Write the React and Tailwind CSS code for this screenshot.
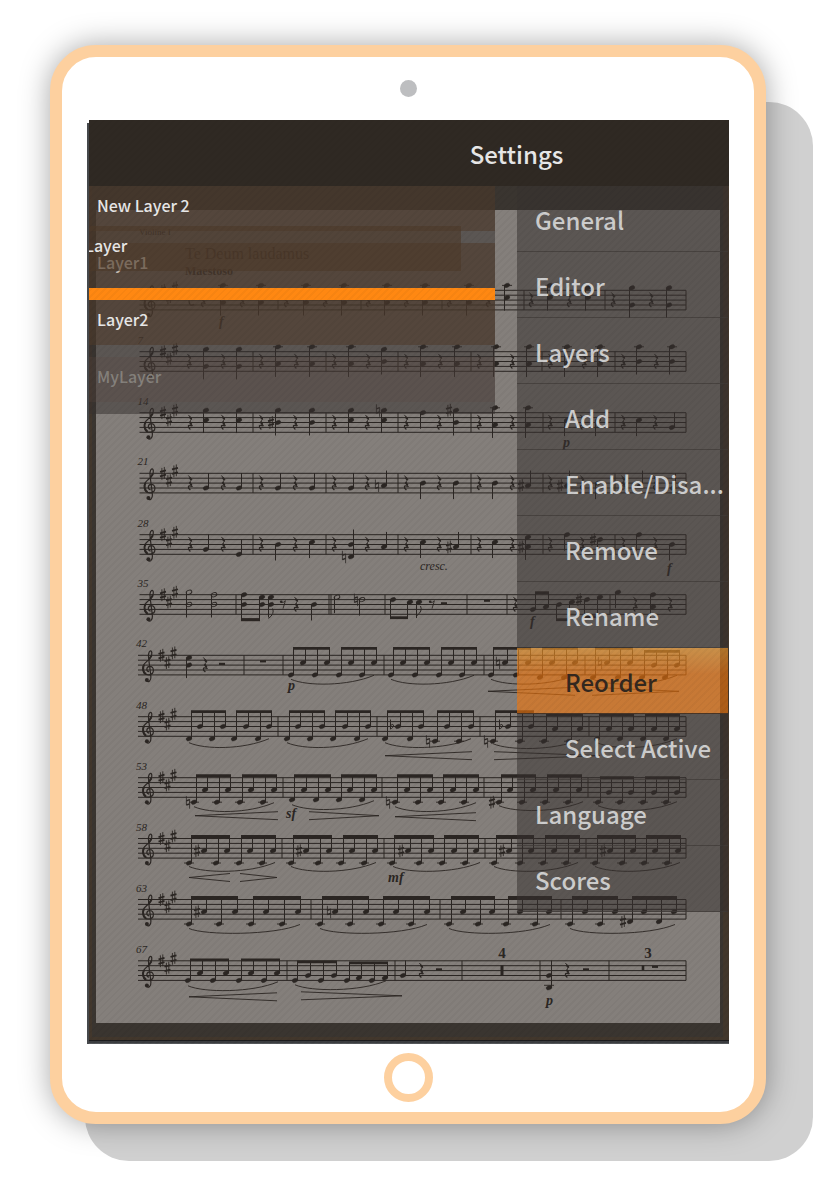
import React from "react";
import clsx from "clsx";

const INK = "#2b2623";
const STEP = 2.45;

const layers = [
  { name: "New Layer 2", tone: "active" },
  { name: "Layer1", tone: "target" },
  { name: "Layer2", tone: "active", dropBefore: true },
  { name: "MyLayer", tone: "dragged" },
];

const menuItems = [
  { label: "General" },
  { label: "Editor" },
  { label: "Layers" },
  { label: "Add", sub: true },
  { label: "Enable/Disa...", sub: true },
  { label: "Remove", sub: true },
  { label: "Rename", sub: true },
  { label: "Reorder", sub: true, selected: true },
  { label: "Select Active", sub: true },
  { label: "Language" },
  { label: "Scores" },
];

// Tokens: r quarter rest, q eighth rest, h half rest, w whole rest, | bar line,
// s sharp, n natural, b flat, u/d note with stem up/down, H half note,
// F flagged note. Steps count half spaces down from the top line.
// beams: [y above the staff, x positions, steps]
const staves = [
  {
    y: 290.3,
    notes:
      "r203 d223:-2,5 r242 d261:-2,5 |278 r286 d306:-2,5 r325 d344:-2,5 |361 r368 d387:-2,5 r406 d425:-2,5 |442 r449 d469:-2,5 r488 d507:-2,3 |524 r531 d550:-2,3 r569 d588:-1,3 |605 r613 d632:-1,6 r651 d669:-1,6",
    time: true,
    marks: [["f", 219, 36]],
  },
  {
    y: 351.7,
    num: "7",
    notes:
      "r189 d206:-1,6 r223 d239:-1,6 |253 r261 d278:-2,5 r296 d312:-2,5 |326 r334 d351:-2,5 r368 d384:-1,4 |398 r406 d423:-2,5 r440 d457:-2,5 |471 r479 d496:-2,5 r512 d529:-2,5 |542 r550 d567:-2,5 r584 d600:-2,5 |615 r623 d639:-2,4 r656 d672:-2,4",
  },
  {
    y: 412.7,
    num: "14",
    notes:
      "r190 d206:-1,3 r223 d239:-1,3 |253 r261 s271:4 d278:-1,4 r295 d312:-1,4 |326 r334 d351:-1,3 r367 n378:-1 d384:-1,3 |398 r406 d423:0 r439 s449:-1 d456:-1,4 |471 r479 d495:-2,5 r512 d528:-2,5 |543 r550 d567:3 r582 d598:3 |615 r623 d639:3 r655 u672:6",
    marks: [["p", 563, 34]],
  },
  {
    y: 473.3,
    num: "21",
    notes:
      "r190 u206:6 r223 u239:6 |253 r261 u278:6 r295 u312:6 |326 r334 u351:6 r367 n377:5 u384:5 |398 r406 d423:4 r439 d456:4 |471 r479 d495:4 r512 s521:5 u528:5 |543 r550 s560:5 u567:5 r582 d598:4 |615 r623 u640:5 r655 u673:6",
  },
  {
    y: 534.7,
    num: "28",
    notes:
      "r190 u206:6 r223 u239:8 |253 r261 d278:4 r295 d312:3 |326 r334 n344:9 u351:4,9 r367 u384:5 |398 r406 d423:3 r439 s449:5 u456:5 |471 r479 d495:3 r512 s521:5 d528:1,5 |543 r550 d567:0 r582 s593:2 d600:2 |615 r623 d639:0 r655 d672:4",
    marks: [["cresc.", 420, 35, true], ["f", 667, 38]],
  },
  {
    y: 594.7,
    num: "35",
    notes:
      "H189:-1,4 H214:0,4 |236 F271:1,4 q283 r296 d314:4 |329 |331 H337:1 n356:2 H362:2 |385 F419:3 q432 h444 |467 w487 |507 r515 s579:2 |610 d618:-1 r635 d653:0,5 r670",
    beams: [
      [25, [244, 262], [0, 1]],
      [25, [244, 262], [4, 4]],
      [23, [393, 410], [2, 3]],
      [-2, [533, 546], [6, 5]],
      [25, [559, 572], [4, 3]],
      [22, [587, 600], [2, 1]],
    ],
    marks: [["f", 530, 31]],
  },
  {
    y: 655.3,
    num: "42",
    notes: "d189:1,4 r205 h222 |244 w263 |283 |384 |484 n498:3 |585 n600:3",
    beams: [
      [-7, [291, 303, 315, 327], [8, 3, 8, 3]],
      [-7, [339, 351, 362, 374], [8, 3, 8, 3]],
      [-7, [391, 403, 415, 427], [8, 3, 8, 3]],
      [-7, [439, 451, 462, 474], [8, 3, 8, 3]],
      [-7, [491, 505, 516, 528], [8, 3, 8, 3]],
      [-7, [540, 552, 564, 575], [9, 3, 9, 3]],
      [-7, [593, 607, 618, 630], [9, 3, 9, 3]],
      [-4, [642, 654, 665, 677], [9, 4, 9, 4]],
    ],
    slurs: [[291, 374, 24], [391, 474, 24], [491, 575, 24], [593, 677, 24]],
    pins: [[488, 575, 36], [679, 592, 36]],
    marks: [["p", 288, 35]],
  },
  {
    y: 716.7,
    num: "48",
    notes: "|278 |377 b392:4 n428:10 |480 n486:10 b501:4 |589",
    beams: [
      [-5, [189, 200, 212, 223], [9, 4, 9, 4]],
      [-5, [234, 246, 258, 269], [9, 4, 9, 4]],
      [-5, [287, 298, 310, 322], [9, 4, 9, 4]],
      [-5, [333, 345, 357, 368], [9, 4, 9, 4]],
      [-5, [385, 398, 410, 421], [9, 4, 9, 4]],
      [-5, [435, 447, 459, 471], [10, 4, 10, 4]],
      [-5, [493, 508, 520, 531], [10, 4, 10, 4]],
      [-2, [544, 555, 569, 580], [10, 5, 10, 5]],
      [-2, [597, 609, 620, 631], [9, 5, 9, 5]],
      [-2, [643, 654, 666, 677], [9, 5, 9, 5]],
    ],
    slurs: [[189, 269, 26], [287, 368, 26], [385, 471, 26], [493, 580, 27], [597, 677, 26]],
    pins: [[385, 472, 39], [600, 494, 39]],
  },
  {
    y: 777.7,
    num: "53",
    notes: "n188:10 |283 |382 n388:10 |484 s492:10 |588",
    beams: [
      [-2, [194, 205, 217, 228], [10, 5, 10, 5]],
      [-2, [240, 251, 263, 274], [10, 5, 10, 5]],
      [-2, [292, 304, 316, 328], [9, 5, 9, 5]],
      [-2, [339, 350, 362, 374], [9, 5, 9, 5]],
      [-2, [395, 407, 418, 430], [10, 5, 10, 5]],
      [-2, [441, 453, 464, 476], [10, 5, 10, 5]],
      [-2, [499, 510, 522, 533], [10, 5, 10, 5]],
      [-2, [545, 556, 568, 579], [10, 5, 10, 5]],
      [0, [598, 609, 620, 631], [10, 6, 10, 6]],
      [0, [643, 654, 666, 677], [10, 6, 10, 6]],
    ],
    slurs: [[194, 274, 29], [292, 374, 27], [395, 476, 29], [499, 583, 28], [598, 677, 28]],
    pins: [[195, 278, 38], [379, 309, 38], [395, 476, 39]],
    marks: [["sf", 286, 40]],
  },
  {
    y: 838.5,
    num: "58",
    notes: "s197:5 |282 s299:5 |384 s401:5 |485 s502:5 |586 s603:5",
    beams: [
      [-2, [189, 204, 216, 227], [10, 5, 10, 5]],
      [-2, [239, 250, 262, 273], [10, 5, 10, 5]],
      [-2, [291, 306, 318, 329], [10, 5, 10, 5]],
      [-2, [341, 352, 364, 375], [10, 5, 10, 5]],
      [-2, [392, 408, 419, 431], [10, 5, 10, 5]],
      [-2, [442, 454, 465, 476], [10, 5, 10, 5]],
      [-2, [494, 509, 520, 531], [10, 5, 10, 5]],
      [-2, [543, 554, 566, 577], [10, 5, 10, 5]],
      [-2, [595, 610, 622, 633], [10, 5, 10, 5]],
      [-2, [644, 655, 667, 678], [10, 5, 10, 5]],
    ],
    slurs: [[189, 275, 28], [291, 376, 28], [393, 480, 28], [494, 578, 28], [595, 680, 28]],
    pins: [[189, 230, 39], [277, 240, 39]],
    marks: [["mf", 388, 43]],
  },
  {
    y: 899.5,
    num: "63",
    notes: "s197:5 |311 n329:5 |440 |561 s623:9",
    beams: [
      [-2, [189, 204, 219, 235], [10, 5, 10, 5]],
      [-2, [251, 266, 282, 298], [10, 5, 10, 5]],
      [-2, [320, 335, 350, 366], [10, 5, 10, 5]],
      [-2, [381, 396, 411, 427], [10, 5, 10, 5]],
      [-2, [449, 463, 478, 492], [10, 5, 10, 5]],
      [-2, [506, 520, 535, 549], [10, 5, 10, 5]],
      [-2, [570, 585, 600, 615], [10, 5, 10, 5]],
      [-2, [630, 644, 659, 674], [9, 5, 9, 5]],
    ],
    slurs: [[189, 300, 29], [320, 427, 29], [449, 550, 29], [570, 675, 29]],
  },
  {
    y: 960.8,
    num: "67",
    notes: "|287 |395 u403:6 r421 h439 |462 |540 u549:6,11 r567 h586 |609 w655",
    beams: [
      [-1, [188, 200, 213, 226], [8, 5, 8, 5]],
      [-1, [239, 251, 264, 277], [8, 5, 8, 5]],
      [1, [295, 308, 321, 334], [8, 6, 8, 6]],
      [2, [347, 359, 372, 385], [8, 7, 8, 7]],
    ],
    slurs: [[188, 278, 25], [295, 386, 24]],
    pins: [[189, 277, 36], [402, 301, 35]],
    marks: [["p", 546, 44]],
    multi: true,
  },
];

const Head = ({ x, y, hollow }) => (
  <ellipse
    cx={x}
    cy={y}
    rx="2.9"
    ry="2"
    transform={`rotate(-22 ${x} ${y})`}
    fill={hollow ? "none" : INK}
    stroke={INK}
    strokeWidth={hollow ? 0.9 : 0.4}
  />
);

const Ledgers = ({ x, y, step }) => {
  const steps = [];
  for (let s = -2; s >= step; s -= 2) steps.push(s);
  for (let s = 10; s <= step; s += 2) steps.push(s);
  return steps.map((s) => (
    <path key={s} d={`M${x - 5} ${y + s * STEP}h10`} strokeWidth="0.9" />
  ));
};

const Accidental = ({ kind, x, y }) => {
  if (kind === "s") {
    return (
      <g transform={`translate(${x} ${y})`}>
        <path d="M-1.1 -5.4V6.4M1.3 -6.4V5.4" strokeWidth="0.9" />
        <path d="M-3 -1.4L3 -3M-3 3L3 1.4" strokeWidth="1.8" />
      </g>
    );
  }
  if (kind === "n") {
    return (
      <g transform={`translate(${x} ${y})`}>
        <path d="M-1.6 -6V3M1.6 -3V6.5" strokeWidth="0.8" />
        <path d="M-1.6 -1.4L1.6 -2.6M-1.6 2.8L1.6 1.6" strokeWidth="1.4" />
      </g>
    );
  }
  return (
    <path
      transform={`translate(${x} ${y})`}
      d="M-1.5 -7V2.6C0 2 2 0 1.6 -1.4C1 -2.6 -1 -1.8 -1.5 -0.6"
      strokeWidth="1"
    />
  );
};

const Symbol = ({ token, top }) => {
  const kind = token[0];
  const [pos, list] = token.slice(1).split(":");
  const x = Number(pos);
  const steps = list ? list.split(",").map(Number) : [];
  const ys = steps.map((s) => top + s * STEP);

  if (kind === "|") return <path d={`M${x} ${top}v19.6`} strokeWidth="1" />;
  if (kind === "r") {
    return (
      <g transform={`translate(${x} ${top + 9.8})`}>
        <path d="M-1.6 -7.6L1.8 -3.4C-0.6 -1.2 -0.6 0 2.4 3.4" strokeWidth="1" />
        <path d="M-0.4 -5.6L1.4 -3.2M-0.5 -0.9L1.6 2.2" strokeWidth="1.9" />
        <path d="M2.4 3.4C-2.6 1.6 -2.6 4.2 0.4 7" strokeWidth="1.3" />
      </g>
    );
  }
  if (kind === "q") {
    return (
      <g transform={`translate(${x} ${top + 9})`}>
        <circle cx="-1.8" cy="-2" r="1.3" fill={INK} stroke="none" />
        <path d="M-2 -1.4Q0.5 -0.6 2.4 -3L0 5" strokeWidth="0.9" />
      </g>
    );
  }
  if (kind === "h") return <path d={`M${x - 3} ${top + 8.6}h6`} strokeWidth="2.2" />;
  if (kind === "w") return <path d={`M${x - 3} ${top + 6}h6`} strokeWidth="2.2" />;
  if ("snb".includes(kind)) return <Accidental kind={kind} x={x} y={ys[0]} />;

  const high = Math.min(...ys);
  const low = Math.max(...ys);
  const up = kind === "u";
  return (
    <g>
      {ys.map((y, i) => (
        <React.Fragment key={i}>
          <Head x={x} y={y} hollow={kind === "H"} />
          <Ledgers x={x} y={top} step={steps[i]} />
        </React.Fragment>
      ))}
      {up ? (
        <path d={`M${x + 2.5} ${low}V${high - 15}`} />
      ) : (
        <path d={`M${x - 2.5} ${high}V${low + (ys.length > 1 ? 13 : 16)}`} />
      )}
      {kind === "F" && (
        <path d={`M${x - 2.5} ${low + 14}Q${x + 4} ${low + 9} ${x + 1.5} ${low + 4}`} />
      )}
    </g>
  );
};

const Beam = ({ top, data: [offset, xs, steps] }) => {
  const y = top + offset;
  const side = offset > 10 ? -2.5 : 2.5;
  return (
    <g>
      {xs.map((x, i) => (
        <g key={x}>
          <Head x={x} y={top + steps[i] * STEP} />
          <Ledgers x={x} y={top} step={steps[i]} />
          <path d={`M${x + side} ${top + steps[i] * STEP}V${y}`} />
        </g>
      ))}
      <path d={`M${xs[0] + side - 0.5} ${y}H${xs[xs.length - 1] + side + 0.5}`} strokeWidth="2.8" />
    </g>
  );
};

const Staff = ({ staff, index }) => {
  const { y, num, notes, beams = [], slurs = [], pins = [], marks = [] } = staff;
  const left = index > 5 ? 138 : 139.5;
  return (
    <g fill="none" stroke={INK} strokeWidth="1">
      {[0, 1, 2, 3, 4].map((i) => (
        <path key={i} d={`M${left} ${y + i * 4.9}H686`} strokeWidth="1" />
      ))}
      <path d={`M686 ${y}v19.6`} />
      <g transform={`translate(${left + 10.5} ${y})`}>
        <path
          d="M0.6 16.4C-2.6 15.8 -2.4 11.4 1 11C6 10.6 6.6 19 0.4 19.5C-6.8 19.8 -7.4 11 -2.4 6.8C1.6 3.4 3.8 0.4 3.3 -2.8C2.6 -5.8 0.6 -4.4 0 -1C-0.4 2 1.8 14 2.4 21.6C2.6 25.6 0 27 -1.6 26"
          strokeWidth="1.2"
        />
        <path d="M-4.4 9.4C-6.4 12.6 -5.4 17 -2.4 18.8M0.2 4.4L3 0.4" strokeWidth="1.9" />
        <circle cx="-1.6" cy="24.6" r="2" fill={INK} stroke="none" />
      </g>
      <Accidental kind="s" x={left + 23.5} y={y} />
      <Accidental kind="s" x={left + 29.5} y={y + 3 * STEP} />
      <Accidental kind="s" x={left + 35.5} y={y - STEP} />
      {staff.time && <path d={`M194 ${y + 6}q-5 -3 -5 4t5 4`} strokeWidth="1.4" />}
      {notes.split(" ").map((token) => (
        <Symbol key={token} token={token} top={y} />
      ))}
      {beams.map((beam, i) => (
        <Beam key={i} top={y} data={beam} />
      ))}
      {slurs.map(([a, b, dy]) => (
        <path
          key={a}
          d={`M${a} ${y + dy}C${a + 16} ${y + dy + 7} ${b - 26} ${y + dy + 7} ${b} ${y + dy - 4}`}
          strokeWidth="0.9"
        />
      ))}
      {pins.map(([a, b, dy]) => (
        <path key={a} d={`M${b} ${y + dy - 4}L${a} ${y + dy}L${b} ${y + dy + 4}`} strokeWidth="0.9" />
      ))}
      {staff.multi && (
        <>
          <path d={`M502 ${y + 4.5}v10`} strokeWidth="3" />
          <path d={`M643 ${y + 4.5}v5`} strokeWidth="2.6" />
        </>
      )}
      <g fill={INK} stroke="none" className="[font-family:'Liberation_Serif',serif]">
        {num && (
          <text x={left - 2} y={y - 8} fontSize="11" fontStyle="italic">
            {num}
          </text>
        )}
        {marks.map(([label, x, dy, plain]) => (
          <text
            key={label}
            x={x}
            y={y + dy}
            fontSize={plain ? 12 : 14}
            fontStyle="italic"
            fontWeight={plain ? 400 : 700}
          >
            {label}
          </text>
        ))}
        {staff.multi && (
          <g fontSize="15" fontWeight="700" textAnchor="middle">
            <text x="502" y={y - 3}>4</text>
            <text x="648" y={y - 3}>3</text>
          </g>
        )}
      </g>
    </g>
  );
};

const SheetMusic = () => (
  <svg viewBox="96 210 624 813" className="block w-full bg-[#847f7b]" role="img" aria-label="Score">
    <g fill={INK} className="[font-family:'Liberation_Serif',serif]">
      <text x="139" y="235" fontSize="9">Violine I</text>
      <text x="185" y="259" fontSize="16">Te Deum laudamus</text>
      <text x="185" y="275" fontSize="12" fontWeight="700">Maestoso</text>
    </g>
    {staves.map((staff, i) => (
      <Staff key={i} staff={staff} index={i} />
    ))}
  </svg>
);

const LayerList = () => (
  <ul className="relative flex-1 overflow-hidden self-start bg-[#363230]/53 pb-3 text-base font-medium">
    {layers.map(({ name, tone, dropBefore }, i) => (
      <React.Fragment key={name}>
        {i > 0 && <li className={clsx("h-3", dropBefore && "bg-[#ff8812]")} />}
        <li
          className={clsx(
            "flex h-[45px] items-center px-2",
            tone === "dragged" ? "bg-[#5a4840]/25 text-[#85817c]" : "bg-[#4e3b2a]/55",
            tone === "active" && "text-[#e8e8e8]",
            tone === "target" && "text-[#c2bab0]"
          )}
        >
          <span className="pb-2">{name}</span>
        </li>
      </React.Fragment>
    ))}
    {/* row being dragged, hangs over the left edge */}
    <li className="absolute top-10 -left-[34px] flex h-[45px] w-full items-center bg-[#4c3828]/60 px-2 text-[#e8e8e8]">
      <span className="pb-2">MyLayer</span>
    </li>
  </ul>
);

const SettingsMenu = () => (
  <nav className="flex w-[211px] flex-col self-start">
    {menuItems.map(({ label, sub, selected }) => (
      <button
        key={label}
        type="button"
        className={clsx(
          "flex h-[66px] items-center border-b pt-0.5 text-left text-2xl font-medium whitespace-nowrap",
          sub ? "pl-12" : "pl-[18px]",
          selected
            ? "border-[#4a3525] bg-linear-to-b from-[#f39a2a]/62 to-[#f0750b]/62 to-40% text-[#33281f]"
            : "border-[#3f3b38]/70 bg-[#363230]/53 text-[#cdcdcd]"
        )}
      >
        {label}
      </button>
    ))}
  </nav>
);

const App = () => {
  return (
    <main className="relative min-h-screen bg-white pt-[45px] pr-[68px] pb-[57px] pl-[50px] [font-family:'Noto_Sans_CJK_SC',sans-serif]">
      <div className="absolute top-[102px] right-[21px] bottom-5 left-[85px] rounded-[44px] bg-[#d0d0d0]" />
      <div className="relative flex flex-col items-center rounded-[46px] border-12 border-[#fdd09f] bg-white px-[25px] pt-[23px] pb-[10px] shadow-[0_0_30px_rgba(0,0,0,0.35)]">
        <div className="size-[17px] rounded-full bg-[#bdbec0]" />

        <div className="mt-[23px] w-full pl-0.5">
          <section className="relative">
            <div className="absolute top-[3px] bottom-0 -left-[2px] w-[2px] bg-[#45484b]" />
            <header className="flex h-[66px] items-center justify-center bg-[#2f2923] pt-0.5 pl-[215px]">
              <h1 className="text-2xl font-medium text-[#e8e8e8]">Settings</h1>
            </header>

            <div className="relative">
              <div className="border-r-[6px] border-b-[3px] border-l-[3px] border-[#42372c] bg-[#3a3530] pt-6 pr-[3px] pb-[14px] pl-1">
                <SheetMusic />
              </div>
              <div className="absolute inset-0 flex gap-[22px] pr-px">
                <LayerList />
                <SettingsMenu />
              </div>
            </div>
            <div className="h-1 border-t border-b border-t-[#1c1c1e] border-b-[#55585b] bg-[#3b3d40]" />
            {/* faint diagonal weave over the whole screen */}
            <div className="pointer-events-none absolute inset-0 bg-[repeating-linear-gradient(135deg,rgba(0,0,0,0.03)_0px,rgba(0,0,0,0.03)_2px,transparent_2px,transparent_5px)]" />
          </section>
        </div>

        <button
          type="button"
          aria-label="Home"
          className="mt-[9px] size-[49px] rounded-full border-8 border-[#fdd09f]"
        />
      </div>
    </main>
  );
};

export default App;
